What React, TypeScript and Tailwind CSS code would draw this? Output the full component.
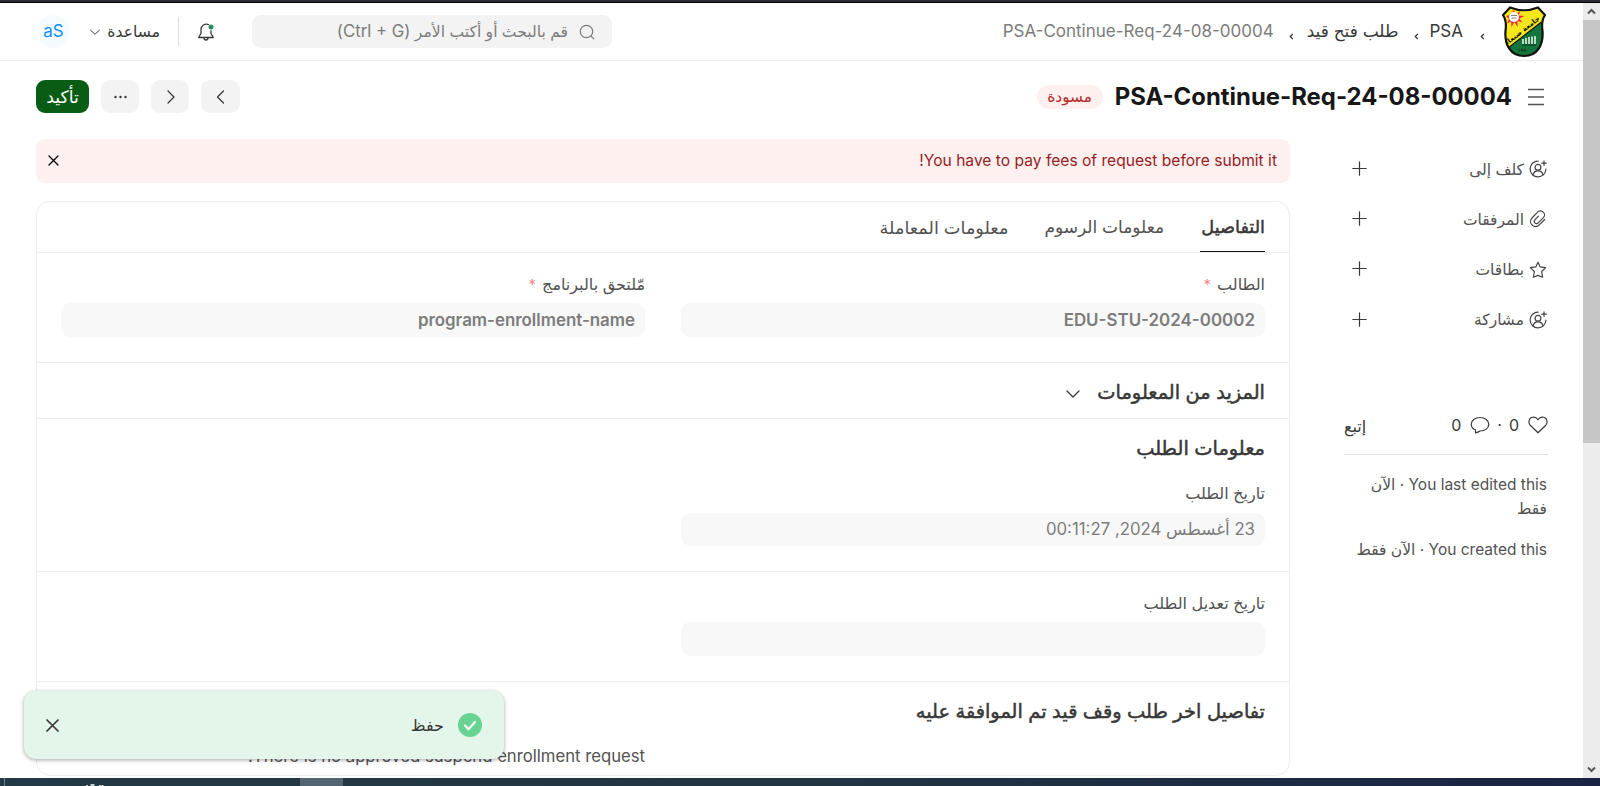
import type { ReactNode } from "react";

const STROKE = { fill: "none", stroke: "currentColor", strokeLinecap: "round", strokeLinejoin: "round" } as const;

function Crest() {
  return (
    <svg className="h-[52px] w-[46px]" viewBox="0 0 46 52">
      <path d="M9 1.5Q23 7 37 1.5L44 9Q40 15 41.500 25C42.500 38 37 50 23 50S3.500 38 4.500 25Q6 15 2 9Z" fill="#f6e71c" />
      <path d="M40.500 16Q40.500 20 41.500 25C42.500 38 37 50 23 50Q12 50 7.500 42Z" fill="#12753a" />
      <path d="M40.500 16 7 42" stroke="#111" strokeWidth="1.200" />
      <path d="M13 4l1.500 4 5-3-2 4.500 6 .5-5 2.500 3 4-5-1.500v6l-3-5-3 5-.5-5.500-4 2 2-4.500-3-3 3.500-1Z" fill="#ee2f3d" />
      <circle cx="13" cy="11" r="5" fill="#fff" />
      <path d="M10 9.500h6M10.500 12h5" stroke="#666" strokeWidth=".8" />
      <text x="22.500" y="26.500" transform="rotate(-38 22.500 26.500)" textAnchor="middle" fontSize="7" fontWeight="700" fontFamily="DejaVu Sans" fill="#111">جامعة صنعاء</text>
      <path d="M22 38v-5M25 38v-6M28 38v-7M31 38v-7.500M34 38v-8" stroke="#e8efe8" strokeWidth="1.600" />
      <path d="M21 39h14" stroke="#0a2b18" strokeWidth=".8" />
      <text x="22.500" y="45.500" textAnchor="middle" fontSize="5" fontFamily="DejaVu Sans" fill="#111">١٩٧٠</text>
      <path d="M9 1.5Q23 7 37 1.5L44 9Q40 15 41.500 25C42.500 38 37 50 23 50S3.500 38 4.500 25Q6 15 2 9Z" fill="none" stroke="#111" strokeWidth="2.200" />
    </svg>
  );
}

function Chevron({ className, d }: { className: string; d: string }) {
  return (
    <svg className={className} viewBox="0 0 16 16" {...STROKE} strokeWidth="1.300">
      <path d={d} />
    </svg>
  );
}

function Plus() {
  return (
    <svg className="mb-0.5 size-[15px] text-[#383838]" viewBox="0 0 15 15" {...STROKE} strokeWidth="1.200">
      <path d="M7.500.8v13.400M.8 7.500h13.400" />
    </svg>
  );
}

function AssignIcon() {
  return (
    <svg className="size-[18px]" viewBox="0 0 18 18" {...STROKE} strokeWidth="1.200">
      <path d="M9.200 1.100A7.900 7.900 0 1 0 16.900 9" />
      <circle cx="9" cy="7.200" r="2.900" />
      <path d="M4 14.900c.6-2.700 2.600-4 5-4s4.400 1.300 5 4M15 .9v4.600M12.700 3.200h4.600" />
    </svg>
  );
}

function ClipIcon() {
  return (
    <svg className="size-[18px]" viewBox="0 0 18 18" {...STROKE} strokeWidth="1.200">
      <path d="M15.700 9.500l-5.400 5.400a5 5 0 0 1-7.600-.2 5 5 0 0 1 .3-6.700l5.300-5.700a3.900 3.900 0 0 1 6-.2 3.900 3.900 0 0 1 .1 5.500l-5.200 5.300a2.200 2.200 0 0 1-3.300 0 2.300 2.300 0 0 1 .1-3.200l3.400-3.600" />
    </svg>
  );
}

function StarIcon() {
  return (
    <svg className="size-[18px]" viewBox="0 0 18 18" {...STROKE} strokeWidth="1.200">
      <path d="M9 1.300l2.200 4.600 5.500.7-4 3.900.9 5.700L9 14.400l-4.600 1.800.9-5.700-4-3.900 5.500-.7Z" />
    </svg>
  );
}

function Label({ children, required }: { children: ReactNode; required?: boolean }) {
  return (
    <div className="flex h-[19px] items-center gap-1.5 text-[16px] leading-[19px] text-[#525252]">
      <span>{children}</span>
      {required && <span className="text-[15px] text-[#f08c8c]">*</span>}
    </div>
  );
}

function Field({ children, className = "" }: { children?: ReactNode; className?: string }) {
  return (
    <div className={`flex w-[584px] items-center rounded-[9px] bg-[#f8f8f8] px-2.5 text-[#7c7c7c] ${className}`}>
      {children}
    </div>
  );
}

function Heading({ children }: { children: ReactNode }) {
  return <h2 className="h-[26px] text-[19.400px] leading-[26px] whitespace-nowrap [-webkit-text-stroke:0.5px_#383838]">{children}</h2>;
}

function SideRow({ icon, label }: { icon: ReactNode; label: string }) {
  return (
    <div className="flex h-[50.3px] items-center justify-between pr-px pl-2 text-[#525252]">
      <div className="flex items-center gap-[5px]">
        <span className="text-[#444]">{icon}</span>
        <span className="text-[15.500px]">{label}</span>
      </div>
      <Plus />
    </div>
  );
}

const sep = (
  <svg className="mt-2 h-[7px] w-[5px]" viewBox="0 0 5 7" fill="none" stroke="#383838" strokeWidth="1.300">
    <path d="M3.800 1L1.300 3.500l2.500 2.500" />
  </svg>
);

export default function App() {
  return (
    <div dir="ltr" className="relative flex h-[786px] w-[1600px] flex-col overflow-hidden bg-white font-['Inter','DejaVu_Sans',sans-serif] text-[#383838]">
      <div className="h-[3px] shrink-0 border-b border-black bg-[#2b2a33]" />
      <div className="flex h-[775px] shrink-0">
        <div dir="rtl" className="flex w-[1583px] flex-col overflow-hidden">
          <header className="flex h-[58px] shrink-0 items-center justify-between border-b border-[#ededed] pr-9 pl-[37px]">
            <div className="flex items-center text-[17px] whitespace-nowrap">
              <Crest />
              <div className="flex items-center pt-px pr-4">
                {sep}
                <span className="mr-[17px] ml-[11px]">PSA</span>
                {sep}
                <span className="mr-[15px] ml-[13px]">طلب فتح قيد</span>
                {sep}
                <span className="mr-[15px] text-[#7c7c7c]">PSA-Continue-Req-24-08-00004</span>
              </div>
            </div>
            <div className="flex items-center">
              <div className="flex h-[33px] w-[360px] items-center gap-2.5 rounded-[9px] bg-[#f3f3f3] px-4 text-[#7c7c7c]">
                <svg className="size-[18px]" viewBox="0 0 18 18" {...STROKE} strokeWidth="1.200">
                  <circle cx="8.500" cy="8.500" r="6.200" />
                  <path d="M13 13l2.800 2.800" />
                </svg>
                <span className="whitespace-nowrap text-[15.600px]">قم بالبحث أو أكتب الأمر <span className="text-[16.800px]">(Ctrl + G)</span></span>
              </div>
              <svg className="mr-[36px] size-[20px]" viewBox="0 0 20 20" {...STROKE} strokeWidth="1.300">
                <path d="M12.500 2.500A5.400 5.400 0 0 0 5 7.500v4L2.700 15.500h14.600L15 11.500V9M8 16c0 1.300.8 2 2 2s2-.7 2-2" />
                <circle cx="15" cy="5" r="2.500" fill="#278f5e" stroke="none" />
              </svg>
              <div className="mr-[17px] h-[29px] w-px bg-[#dcdcdc]" />
              <span className="mr-[18px] w-[52px] text-[15.600px] whitespace-nowrap">مساعدة</span>
              <Chevron className="mr-[7px] size-[12px]" d="M2 5.500l6 5.500 6-5.500" />
              <div className="mr-[19px] flex size-[33px] items-center justify-center rounded-full bg-[#f6fbff] text-[17px] text-[#1190ff]">aS</div>
            </div>
          </header>

          <div className="flex h-[78px] shrink-0 items-start justify-between px-9 pt-[19px]">
            <div className="flex h-[33px] items-center">
              <svg className="mr-[3px] h-[18px] w-4 text-[#525252]" viewBox="0 0 16 18" fill="none" stroke="currentColor" strokeWidth="1.300">
                <path d="M0 1.500h16M0 9h16M0 16.500h16" />
              </svg>
              <h1 className="mr-4 whitespace-nowrap text-[23.900px] font-bold text-[#171717]">PSA-Continue-Req-24-08-00004</h1>
              <span className="mr-3 flex h-6 w-[66px] items-center justify-center rounded-full bg-[#fff0f0] text-[15.400px] text-[#b52a2a]">مسودة</span>
            </div>
            <div className="flex gap-3 text-[#383838]">
              <div className="flex h-[33px] w-[39px] items-center justify-center rounded-[9px] bg-[#f3f3f3]">
                <Chevron className="size-[16px]" d="M10.500 2L4.500 8l6 6" />
              </div>
              <div className="flex h-[33px] w-[38px] items-center justify-center rounded-[9px] bg-[#f3f3f3]">
                <Chevron className="size-[16px]" d="M6 2l6 6-6 6" />
              </div>
              <div className="flex h-[33px] w-[38px] items-center justify-center rounded-[9px] bg-[#f3f3f3]">
                <svg className="h-1 w-[13px]" viewBox="0 0 13 4" fill="currentColor">
                  <circle cx="1.500" cy="2" r="1.200" /><circle cx="6.500" cy="2" r="1.200" /><circle cx="11.500" cy="2" r="1.200" />
                </svg>
              </div>
              <div className="flex h-[33px] w-[53px] items-center justify-center rounded-[9px] bg-[#085c14] text-[17.300px] text-white">تأكيد</div>
            </div>
          </div>

          <div className="flex grow items-start pr-[35px]">
            <aside className="w-[204px] shrink-0 pt-[5px]">
              <SideRow icon={<AssignIcon />} label="كلف إلى" />
              <SideRow icon={<ClipIcon />} label="المرفقات" />
              <SideRow icon={<StarIcon />} label="بطاقات" />
              <SideRow icon={<AssignIcon />} label="مشاركة" />
              <div className="mt-[70px] flex h-10 items-start justify-between border-b border-[#e2e2e2] text-[16px] leading-5">
                <div className="flex items-center">
                  <svg className="h-[18px] w-5" viewBox="0 0 20 18" {...STROKE} strokeWidth="1.200">
                    <path d="M10 16.800L2.200 9.200A4.900 4.900 0 0 1 1 5.500C1.300 1 7.200-.7 10 3.800 12.800-.7 18.700 1 19 5.500a4.900 4.900 0 0 1-1.200 3.700Z" />
                  </svg>
                  <span className="mr-[9px]">0</span>
                  <span className="mr-[7px]">·</span>
                  <svg className="mr-[7px] h-[18px] w-5" viewBox="0 0 20 18" {...STROKE} strokeWidth="1.200">
                    <path d="M5.500 16.800V14C3 13 1.200 10.800 1.200 8.300 1.200 4.400 5 1.500 10 1.500s8.800 2.900 8.800 6.800S15 15 10 15c-1.500 1-3 1.500-4.500 1.800Z" />
                  </svg>
                  <span className="mr-[9px]">0</span>
                </div>
                <span className="pt-px text-[16px]">إتبع</span>
              </div>
              <p className="mt-[18px] pr-px pl-6 text-[15.500px] leading-6 text-[#525252]">You last edited this · الآن فقط</p>
              <p className="mt-[17px] pr-px text-[15.500px] leading-6 whitespace-nowrap text-[#525252]">You created this · الآن فقط</p>
            </aside>

            <main className="mr-[54px] w-[1254px] shrink-0">
              <div className="flex h-[44px] items-center justify-between rounded-[9px] bg-[#fff0f0] pr-[13px] pl-3 text-[15.600px] text-[#941f1f]">
                <span>You have to pay fees of request before submit it!</span>
                <svg className="mb-0.5 size-[11px] text-black" viewBox="0 0 11 11" {...STROKE} strokeWidth="1.300"><path d="M1 1l9 9M10 1l-9 9" /></svg>
              </div>
              <div className="mt-[18px] h-[575px] rounded-[14px] border border-[#ededed]">
                <div className="flex h-[51px] gap-9 border-b border-[#ededed] pr-6 text-[17px] text-[#525252]">
                  <div className="flex h-[50px] w-[65px] items-center border-b border-[#171717] pt-0.5 text-[17.700px] text-[#383838] [-webkit-text-stroke:0.5px_#383838]">التفاصيل</div>
                  <div className="flex h-[50px] items-center pt-0.5">معلومات الرسوم</div>
                  <div className="flex h-[50px] items-center pt-0.5 text-[17.700px]">معلومات المعاملة</div>
                </div>
                <section className="flex h-[110px] gap-9 border-b border-[#ededed] pt-[22px] pr-6">
                  <div>
                    <Label required>الطالب</Label>
                    <Field className="mt-[9px] h-[34px] pt-0.5 text-[16.950px] font-semibold">EDU-STU-2024-00002</Field>
                  </div>
                  <div>
                    <Label required>مّلتحق بالبرنامج</Label>
                    <Field className="mt-[9px] h-[34px] pt-0.5 text-[16.900px] font-semibold">program-enrollment-name</Field>
                  </div>
                </section>
                <section className="flex h-[56px] items-center gap-4 border-b border-[#ededed] pt-0.5 pr-6">
                  <Heading>المزيد من المعلومات</Heading>
                  <Chevron className="mt-1 size-[16px]" d="M2 5l6 6 6-6" />
                </section>
                <section className="h-[153px] border-b border-[#ededed] pt-4 pr-6">
                  <Heading>معلومات الطلب</Heading>
                  <div className="pt-[23px]">
                    <Label>تاريخ الطلب</Label>
                    <Field className="mt-[10px] h-[33px] text-[16.800px]">23 أغسطس 2024, 00:11:27</Field>
                  </div>
                </section>
                <section className="h-[110px] border-b border-[#ededed] pt-[22px] pr-6">
                  <Label>تاريخ تعديل الطلب</Label>
                  <Field className="mt-[9px] h-[34px]" />
                </section>
                <section className="px-6 pt-4">
                  <Heading>تفاصيل اخر طلب وقف قيد تم الموافقة عليه</Heading>
                  <p className="mt-[20px] pr-[620px] text-[16.700px] leading-6 whitespace-nowrap text-[#525252]">There is no approved suspend enrollment request.</p>
                </section>
              </div>
            </main>
          </div>
        </div>

        <div className="flex w-[17px] flex-col bg-[#ececec]">
          <div className="flex h-[17px] items-center justify-center text-[#555]">
            <svg className="size-[9px]" viewBox="0 0 9 9" fill="none" stroke="currentColor" strokeWidth="2"><path d="M1 6.500L4.500 3 8 6.500" /></svg>
          </div>
          <div className="h-[423px] bg-[#c6c6c6]" />
          <div className="mt-auto flex h-[17px] items-center justify-center text-[#555]">
            <svg className="size-[9px]" viewBox="0 0 9 9" fill="none" stroke="currentColor" strokeWidth="2"><path d="M1 2.500L4.500 6 8 2.500" /></svg>
          </div>
        </div>
      </div>

      <div className="flex h-2 shrink-0 overflow-hidden bg-linear-to-r from-[#223a45] via-[#213541] to-[#1a2344]">
        <div className="w-[5px] border-r border-[#71828a]" />
        <svg className="ml-[80px] h-2 w-5" viewBox="0 0 20 8" stroke="#fff" strokeWidth="1.500">
          <path d="M2 7v1M5.500 7h4M15 7v1M17.500 7v1" />
        </svg>
        <div className="ml-[195px] h-2 w-[43px] bg-[#526570]" />
      </div>

      <div dir="rtl" className="absolute top-[691px] left-6 flex h-[68px] w-[480px] items-center rounded-[12px] bg-[#e4f5e9] pr-[22px] pl-[22px] shadow-[0_1px_4px_rgba(0,0,0,0.35)]">
        <svg className="size-6" viewBox="0 0 24 24">
          <circle cx="12" cy="12" r="12" fill="#68d391" />
          <path d="M7 12.500l3.500 3.800L17 9" fill="none" stroke="#fff" strokeWidth="2.200" strokeLinecap="round" strokeLinejoin="round" />
        </svg>
        <span className="mr-[14px] text-[16px]">حفظ</span>
        <svg className="mr-auto size-[13px]" viewBox="0 0 13 13" {...STROKE} strokeWidth="1.700"><path d="M1 1l11 11M12 1L1 12" /></svg>
      </div>
    </div>
  );
}
